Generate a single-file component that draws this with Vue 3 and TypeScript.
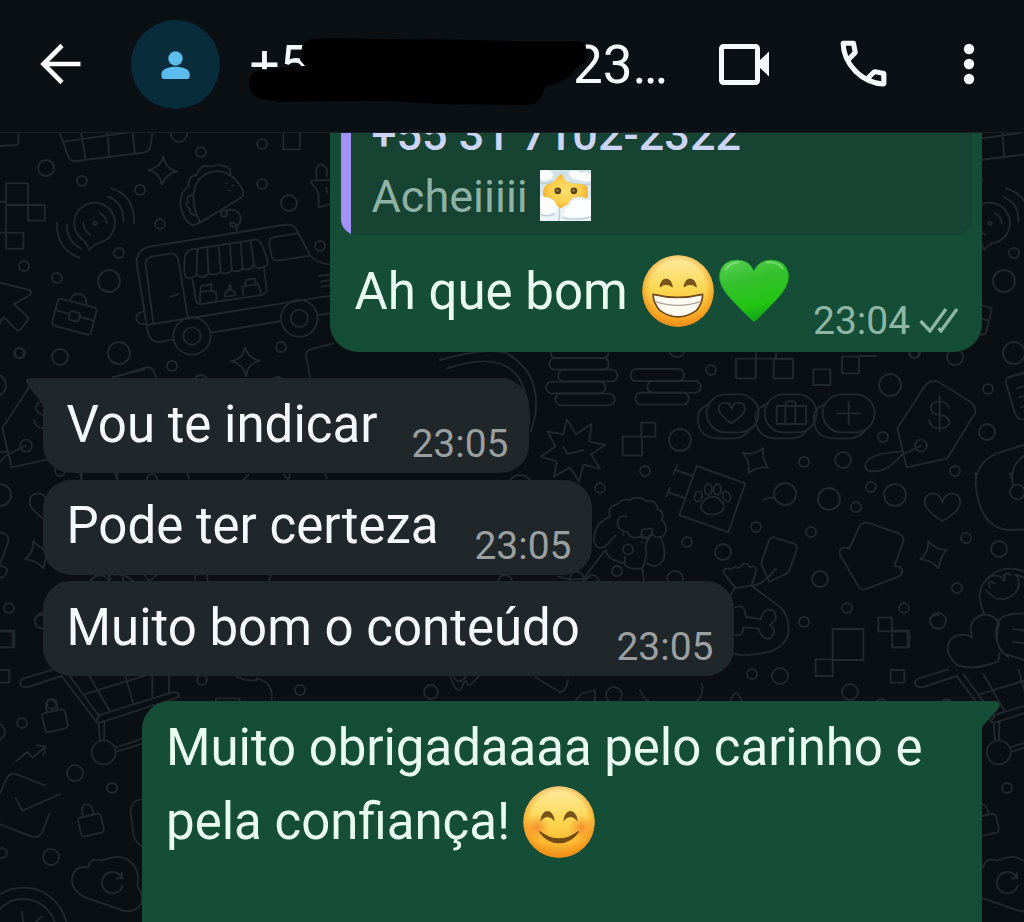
<script setup lang="ts">
interface Incoming {
  text: string
  time: string
  width: number
  tail: boolean
}

const incoming: Incoming[] = [
  { text: 'Vou te indicar', time: '23:05', width: 486, tail: true },
  { text: 'Pode ter certeza', time: '23:05', width: 549, tail: false },
  { text: 'Muito bom o conteúdo', time: '23:05', width: 691, tail: false },
]

// Wallpaper dots: x, y, radius
const dots: [number, number, number][] = [
  [46, 168, 8], [82, 181, 5], [201, 152, 5], [262, 144, 5], [140, 190, 5], [179, 134, 8],
  [262, 184, 5], [289, 203, 8], [160, 224, 5], [119, 253, 5], [24, 266, 5], [57, 278, 5],
  [109, 281, 11], [320, 246, 5], [19, 353, 5], [60, 357, 8], [119, 353, 11], [172, 366, 5],
  [281, 347, 5], [201, 382, 7], [278, 382, 5], [152, 479, 5], [9, 608, 5], [202, 680, 5],
  [300, 690, 5], [711, 370, 5], [680, 440, 11], [645, 471, 5], [600, 488, 5], [687, 542, 5],
  [723, 552, 8], [756, 527, 5], [617, 571, 5], [675, 579, 8], [520, 487, 12], [505, 582, 7],
  [592, 582, 7], [677, 349, 8], [752, 674, 5], [780, 676, 8], [890, 385, 11], [915, 353, 5],
  [988, 389, 5], [987, 432, 8], [883, 437, 5], [843, 460, 8], [804, 462, 5], [785, 494, 11],
  [829, 499, 11], [856, 507, 5], [871, 487, 5], [895, 495, 11], [955, 471, 5], [811, 532, 5],
  [820, 579, 8], [966, 538, 5], [999, 549, 8], [847, 608, 5], [957, 588, 5], [804, 622, 5],
  [938, 621, 8], [850, 692, 8], [881, 704, 5], [947, 704, 5], [22, 723, 5], [75, 773, 8],
  [112, 788, 5], [51, 857, 8], [614, 695, 8], [431, 692, 7], [897, 853, 5], [892, 732, 8],
]
</script>

<template>
  <div class="screen">
    <header class="bar">
      <svg class="back" viewBox="0 0 42 42" width="42" height="42">
        <path d="M40.500 21H3.500M22 2.500L3.500 21L22 39.500" fill="none" stroke="#fff" stroke-width="4.600" />
      </svg>
      <div class="avatar">
        <svg viewBox="0 0 30 30" width="30" height="30" fill="#5cbcec">
          <circle cx="14.500" cy="8.500" r="7.200" />
          <path d="M.5 26V24C.5 19 8 16.700 14.500 16.700S28.700 19 28.700 24V26Q28.700 29 26 29H3.200Q.5 29 .5 26Z" />
        </svg>
      </div>
      <div class="contact">
        <span class="prefix">+5</span>
        <span class="suffix">23…</span>
        <svg class="mask" viewBox="245 30 350 80" width="350" height="80">
          <path d="M310 39C340 37 380 40 430 39L515 41L578 41Q587 42 586 50Q590 57 584 64Q576 67 572 74Q565 82 545 87Q543 98 534 104Q526 106 515 105L440 104L385 101L278 102Q270 99 262 99Q249 96 249 84Q249 72 260 69Q275 70 284 67L305 66L300 60Q302 50 302 46Q305 41 310 39Z" fill="#000" />
        </svg>
      </div>
      <svg class="video" viewBox="0 0 54 44" width="54" height="44">
        <rect x="3.500" y="4.500" width="36" height="36" rx="2" fill="none" stroke="#f7fafc" stroke-width="5" />
        <path d="M41 19L51 9.500V34.500L41 25Z" fill="#f7fafc" />
      </svg>
      <svg class="call" viewBox="0 0 24 24" width="61" height="61" fill="#f7fafc">
        <path d="M19.950 21q-3.125 0-6.175-1.362T8.225 15.800 4.363 10.250 3 4.050q0-.45.3-.75t.75-.3H8.100q.35 0 .625.238t.325.562l.65 3.500q.05.4-.025.675T9.400 8.450L6.975 10.900q.5.925 1.187 1.787t1.513 1.663q.775.775 1.625 1.438T13.100 17l2.350-2.350q.225-.225.588-.338t.712-.062l3.450.7q.35.1.575.363T21 15.900v4.050q0 .45-.3.75t-.75.3M6.025 9l1.650-1.650L7.250 5H5.025q.125 1.025.35 2.025T6.025 9m8.950 8.950q.975.425 1.988.675T19 18.950v-2.200l-2.350-.475z" />
      </svg>
      <svg class="more" viewBox="0 0 12 42" width="12" height="42" fill="#f7fafc">
        <circle cx="6" cy="6" r="5.200" /><circle cx="6" cy="21" r="5.200" /><circle cx="6" cy="36" r="5.200" />
      </svg>
    </header>

    <main class="chat">
      <svg class="wallpaper" viewBox="0 133 1024 789" width="1024" height="789">
        <defs>
          <g id="doodles">
            <circle v-for="(d, i) in dots" :key="i" :cx="d[0]" :cy="d[1]" :r="d[2]" stroke-width="1.900" />
            <g transform="translate(0 130) scale(.33333)">
              <path d="M180 10L205 80Q212 96 230 93L430 68Q448 65 452 45L457 10M192 35L380 8M243 8L257 88M322 8L328 82M398 8L405 72M0 48L50 45Q56 44 55 35V8" />
              <path d="M18 160H84V225H18ZM84 225H134V272H84ZM18 308H70V356H18ZM18 225V308M0 216H18M0 308H18" />
              <path d="M250 330A61 61 0 1 1 300 338Q284 340 268 360Q264 345 250 330ZM300 250Q318 258 320 280M250 278Q250 300 270 314M325 200Q372 220 370 273M333 175Q405 195 402 280M200 283Q200 335 245 357M170 278Q172 360 238 383" />
              <circle cx="285" cy="280" r="5" />
              <path d="M490 80Q497 118 532 124Q497 130 486 164Q480 128 444 120Q482 114 490 80ZM735 652Q744 686 780 692Q744 698 738 738Q730 700 692 694Q730 688 735 652Z" />
              <path d="M600 278L720 205Q735 195 728 180Q700 125 650 123Q585 130 580 200Q580 240 597 268Q602 285 575 285Q550 270 541 225Q540 185 565 170Q565 135 590 135Q600 100 635 110Q665 98 690 118L692 132M575 195q-20 5-10 20q-15 10 5 22q-5 15 18 20M678 160h4M697 166h4M686 181h4" />
              <path d="M680 240Q722 235 722 268Q718 295 692 288Q685 278 702 278Q712 285 710 302" /><circle cx="672" cy="251" r="9" />
              <path d="M440 585L410 400Q408 360 450 350L850 285Q880 280 890 300L930 375Q950 400 990 403M440 585L1010 494M440 585Q445 640 480 636L520 628M633 608L845 573M955 555L1000 549M460 580L437 405Q435 385 455 380L510 371Q530 370 535 390L563 560M510 500q20-2 25-10M430 545Q405 550 410 570Q415 585 438 582" />
              <circle cx="576" cy="618" r="56" /><circle cx="576" cy="618" r="26" /><circle cx="898" cy="565" r="55" /><circle cx="898" cy="565" r="26" />
              <path d="M555 380Q558 362 575 358L770 328Q785 330 803 395Q804 412 785 412Q772 420 760 405Q750 425 728 416Q715 430 695 420Q680 438 662 425Q645 440 625 430Q610 450 590 435Q572 452 556 440Q550 415 555 380M592 357L590 435M622 352L625 430M656 347L662 425M690 342L695 420M722 336L728 414M752 332L762 405M578 450L588 510Q590 524 605 522L785 495Q800 490 800 478L792 415M600 515V488Q620 478 648 486L650 512M602 482Q598 462 618 466L635 462V482M676 500Q672 485 687 480V466H692V480Q710 488 706 496ZM730 495L727 470L775 462L782 488M735 465L738 450L765 446L768 460" />
              <path d="M808 340Q806 325 820 322L890 310M808 340L815 380Q820 393 832 392L930 377M958 438L1000 432M962 455L1000 449M965 470L1000 465" />
              <g transform="rotate(15 223 560)"><rect x="163" y="518" width="120" height="84" rx="10" /><path d="M163 556H207M239 556H283M198 518Q200 490 223 490T248 518" /><rect x="208" y="546" width="30" height="26" rx="4" /></g>
              <path d="M0 458L88 480Q98 485 90 495L42 522L82 560Q88 568 80 575L62 598Q55 605 48 598L15 565Q5 560 0 580" />
              <path d="M1000 150L935 152Q930 158 945 172Q960 185 955 232L1000 220M950 150Q942 105 965 103Q985 110 980 140M978 172l4 16M850 8V58H900V8M340 742L440 712Q460 708 468 742M930 742L918 680Q915 665 930 658L1000 640" />
            </g>
            <g transform="translate(0 360) scale(.33333)">
              <path d="M240 340l5 15M345 340l6 17M562 340l5 15M745 345l-15 15M850 340l15 20l5-20M975 340l5 15M270 665l15-15q30-10 40 12M325 645l5 15M360 645q20 0 38 18M435 645q10 30 35 0M585 645v18M622 645v18M812 645l-5 18M105 780Q105 765 130 765M105 780Q105 805 130 805" />
              <path d="M-5 815H38V862H-5" />
            </g>
            <g transform="translate(480 340) scale(.33333)">
              <path d="M-120 60Q20 20 80 40Q185 100 165 230L152 275M-100 85Q70 30 120 120Q148 170 148 250" />
              <rect x="208" y="54" width="178" height="35" rx="17" /><rect x="234" y="89" width="178" height="35" rx="17" /><rect x="198" y="125" width="178" height="35" rx="17" /><rect x="226" y="161" width="178" height="35" rx="17" /><path d="M212 38Q212 54 230 54H370Q386 54 385 38" />
              <rect x="452" y="87" width="160" height="36" rx="17" /><rect x="502" y="123" width="160" height="35" rx="17" /><rect x="466" y="158" width="160" height="36" rx="17" />
              <path d="M260 238L288 283L335 252L328 305L376 315L333 343L360 386L310 374L297 425L270 382L222 410L230 364L182 350L226 320L203 274L250 283ZM250 320L262 342L310 330" />
              <path d="M428 290H486V347H428ZM484 248H526V290H484ZM768 56H827V115H768ZM768 56H940M828 38V56M888 38V56" />
              <g id="pill"><rect x="680" y="163" width="156" height="114" rx="57" /><path d="M690 190Q652 205 653 235Q655 295 715 295H765Q790 292 805 275" /></g>
              <use href="#pill" x="174" /><use href="#pill" x="348" />
              <path d="M755 250Q715 222 716 205Q717 188 735 188Q752 188 755 208Q758 188 775 188Q795 190 795 208Q794 222 755 250Z" />
              <path d="M650 378L796 430L745 577L598 525ZM638 408L585 390M592 375L580 403M614 474L563 456M570 443L558 470" />
              <path d="M697 470C720 470 738 495 728 512C715 525 685 530 667 512C655 495 675 470 697 470Z" /><ellipse cx="655" cy="469" rx="11" ry="16" transform="rotate(15 655 469)" /><ellipse cx="685" cy="448" rx="11" ry="16" /><ellipse cx="712" cy="448" rx="11" ry="16" /><ellipse cx="740" cy="470" rx="11" ry="16" transform="rotate(-20 740 470)" />
              <path d="M787 337Q820 350 850 323Q845 355 864 383Q830 378 806 400Q810 360 787 337ZM850 480Q865 470 885 474" />
              <path d="M390 530Q380 500 412 493Q425 475 450 480Q475 465 500 483Q530 480 533 507Q555 515 545 540Q570 560 550 588Q520 600 515 575Q525 560 500 568Q480 565 485 585Q500 600 515 585Q505 600 480 590Q450 600 442 575Q415 575 412 548Q415 525 440 530M390 530Q340 550 342 605Q355 640 385 610L407 585M378 630Q380 660 435 670Q435 690 485 685Q505 650 497 620Q500 600 515 580M540 590Q560 630 550 660Q530 690 500 670M435 672V650M375 632L315 710M487 685L492 722M430 580v5M485 605v3M235 710Q280 725 330 712" /><circle cx="444" cy="628" r="15" /><circle cx="411" cy="693" r="15" /><circle cx="290" cy="715" r="20" />
              <path d="M765 742L732 700Q725 685 745 685Q755 690 765 680Q780 690 790 670Q805 670 808 682Q825 675 830 690L815 735Q790 745 765 742ZM815 738L900 800Q930 830 925 880Q915 920 870 935Q800 950 762 942M765 742L750 770M765 802Q795 790 797 830L843 838Q850 800 880 812Q900 835 870 855Q895 870 870 895Q845 900 835 865L790 862Q790 890 765 885" />
              <path d="M818 738Q860 725 885 688M885 688L890 688M880 592L945 612Q955 620 950 630L930 685Q925 700 910 705L868 725L845 675Q843 665 850 650L868 600Q872 592 880 592Z" />
            </g>
            <g transform="translate(740 340) scale(.33333)">
              <path d="M101 58H159V115H101ZM220 88H271V135H220ZM306 50H357V100H306ZM357 48H407" />
              <path d="M110 198H198V252H110ZM136 198V252M166 198V252M136 198Q135 183 152 183Q168 183 168 198M326 186V254M292 220H360" />
              <path d="M472 265L555 137Q570 118 595 125L690 185Q710 200 705 220L622 355L500 382ZM485 335Q375 340 375 380Q378 400 420 392Q450 385 485 345L543 317" /><circle cx="543" cy="317" r="18" />
              <path d="M627 205Q625 185 598 184Q572 186 572 205Q575 222 598 225Q628 228 628 248Q625 265 598 265Q570 265 568 240M599 168V273" />
              <path d="M607 543Q553 510 554 485Q556 460 580 460Q602 462 607 488Q612 462 636 460Q660 462 661 485Q660 515 607 543Z" />
              <path d="M850 315L770 340Q705 370 707 435Q720 570 815 570L852 568M852 347Q805 380 820 440" /><circle cx="832" cy="456" r="22" />
              <path d="M900 88L810 110Q795 115 798 130L825 220Q832 240 850 238M830 145l30-8M838 172l25-6M842 202l20-5" />
              <path d="M358 560Q368 542 390 550L480 582Q492 590 490 605L463 678Q490 680 486 695Q485 705 475 710L375 748Q360 750 355 738L300 645Q295 625 312 622L328 626ZM565 603Q585 630 620 630Q600 650 596 685Q575 660 541 658Q565 640 565 603Z" />
              <path d="M278 867H370V960H278ZM227 958H278V1008H227ZM415 833H456V874H415ZM456 872H508V922H456ZM452 990H493V1028H452Z" />
              <path d="M733 822Q690 730 780 690Q820 680 855 695M738 750Q780 800 825 760Q845 735 830 705M750 742Q740 715 765 730M795 718Q790 690 812 705" />
              <path d="M650 975Q605 930 635 895Q665 875 697 892Q680 840 725 825Q760 820 778 850Q760 910 790 940L852 960M852 820Q780 820 772 850Q755 915 805 952M820 867l35 5M820 905l35 5M650 975Q690 990 740 975L775 965L778 940" />
            </g>
            <g transform="translate(0 660) scale(.33333)">
              <path d="M160 28L72 55Q55 62 62 75Q70 85 88 80L185 48L285 180Q290 190 300 188L525 115Q540 110 537 103Q530 95 515 98L295 166L205 42M250 104L490 30M300 165L290 180M265 42L327 150M370 28L400 132M457 30V115M507 30V100M296 190L300 240M313 186L312 238M348 262L430 235M352 274L430 250" />
              <circle cx="311" cy="277" r="36" />
              <g id="lock" transform="rotate(-13 166 182)"><rect x="130" y="153" width="70" height="58" rx="10" /><path d="M148 153V140Q148 118 164 118Q180 120 180 140V153" /></g>
              <use href="#lock" x="108" y="313" />
              <path d="M48 304L82 275L97 293L136 260M110 256L137 260L130 286M0 400L20 355Q30 337 50 343L135 376M48 415L67 452L181 402M148 462L125 520Q115 535 95 530L0 493M430 418Q390 420 392 460L400 520Q405 550 430 562" />
              <path d="M265 622Q270 590 305 602Q330 592 355 590Q412 600 415 660L412 680Q430 700 425 730Q405 760 370 752L255 712Q210 690 217 650Q225 615 265 622ZM368 678A32 32 0 1 1 364 650M350 655L367 654L365 638" />
              <circle cx="70" cy="815" r="132" /><circle cx="70" cy="815" r="98" /><path d="M65 755L72 800M125 770L90 800" />
              <path d="M648 125V115H718V125M708 48Q735 65 770 60M770 55Q820 65 815 120M1270 30Q1300 60 1330 30M1360 50q20 30 40-5" />
            </g>
            <path d="M450 677q8 20 12 10t5-4t12-7M535 677l25 15q6 0 8-12M640 690Q650 714 690 706Q705 698 702 684M575 702l6-8l14-4v12M730 701q6-15 12 0" stroke-width="1.800" />
          </g>
        </defs>
        <g class="ink">
          <use href="#doodles" x="-895" />
          <use href="#doodles" />
          <use href="#doodles" x="895" />
        </g>
      </svg>

      <section class="bubble out first">
        <div class="quote">
          <div class="quote-name">+55 31 7102-2322</div>
          <div class="quote-line">
            <span class="quote-text">Acheiiiii</span>
            <svg class="cloudface" viewBox="0 0 152 152" width="51" height="51">
              <defs>
                <radialGradient id="sun" cx=".5" cy=".5" r=".55"><stop offset="0" stop-color="#fde070" /><stop offset=".6" stop-color="#fbd04d" /><stop offset="1" stop-color="#f0a82a" /></radialGradient>
                <linearGradient id="sky" x2="0" y2="1"><stop offset="0" stop-color="#cfdfe6" /><stop offset="1" stop-color="#eef5fa" /></linearGradient>
              </defs>
              <rect width="152" height="152" fill="url(#sky)" />
              <path d="M0 4Q22-6 34 6Q44 12 38 22Q24 34 0 30ZM84 6Q104-4 122 8Q140 2 152 12V32Q130 38 112 28Q92 28 84 6ZM0 80Q20 74 34 88Q50 92 52 108Q56 122 40 128Q20 138 0 130ZM74 118Q80 108 90 104Q94 84 110 86Q128 82 134 92L152 86V142Q110 150 82 140Q66 134 74 118Z" fill="#fbfdff" />
              <path d="M0 132Q24 142 44 130M66 142Q100 152 152 140M57 114Q60 130 56 152M0 38Q20 44 38 34M86 36Q110 46 152 42" fill="none" stroke="#bccdd8" stroke-width="4" />
              <path d="M9 64Q12 48 24 42Q38 40 46 30Q54 16 64 12Q70 18 74 30Q88 42 106 40Q126 42 138 46Q146 62 141 84Q122 76 102 82Q88 88 84 102Q72 106 62 114Q50 110 46 96Q36 82 12 80Q7 74 9 64Z" fill="url(#sun)" />
              <circle cx="53" cy="62" r="10" fill="#5a4317" /><circle cx="101" cy="62" r="10" fill="#5a4317" /><circle cx="52" cy="61" r="4" fill="#9a7f45" /><circle cx="100" cy="61" r="4" fill="#9a7f45" />
            </svg>
          </div>
        </div>
        <div class="reply">
          <span class="text reply-text">Ah que bom</span>
          <svg class="emoji grin" viewBox="0 0 216 216" width="72" height="72">
            <defs>
              <linearGradient id="face" x1="0" y1="0" x2="0" y2="1"><stop offset="0" stop-color="#fdeaa4" /><stop offset=".45" stop-color="#fdda55" /><stop offset=".8" stop-color="#fcb831" /><stop offset="1" stop-color="#f2981f" /></linearGradient>
              <radialGradient id="rim" cx=".5" cy=".46" r=".54"><stop offset=".7" stop-color="#f79a1c" stop-opacity="0" /><stop offset="1" stop-color="#ee8c14" stop-opacity=".85" /></radialGradient>
            </defs>
            <circle cx="108" cy="108" r="107" fill="url(#face)" /><circle cx="108" cy="108" r="107" fill="url(#rim)" />
            <path d="M54 96Q57 73 72 72Q88 73 91 96Q82 88 72 88Q63 88 54 96ZM126 96Q129 73 144 72Q160 73 163 96Q154 88 144 88Q135 88 126 96Z" fill="#79521a" stroke="#79521a" stroke-width="3" stroke-linejoin="round" />
            <path d="M33 118Q108 136 182 118Q182 145 164 166Q108 205 53 166Q34 145 33 118Z" fill="#fffaf2" stroke="#6c491c" stroke-width="5" stroke-linejoin="round" />
            <path d="M38 139Q108 163 178 139" fill="none" stroke="#aaa198" stroke-width="4" />
          </svg>
          <svg class="emoji heart" viewBox="0 0 216 196" width="72" height="66">
            <defs><linearGradient id="green" x1=".2" y1="0" x2=".5" y2="1"><stop offset="0" stop-color="#55ce52" /><stop offset=".35" stop-color="#34c02d" /><stop offset=".75" stop-color="#24c414" /><stop offset="1" stop-color="#12a414" /></linearGradient></defs>
            <path d="M108 190Q92 178 42 125Q-2 80 5 46Q12 6 58 5Q94 6 108 38Q122 6 158 5Q204 6 211 46Q218 80 174 125Q124 178 108 190Z" fill="url(#green)" stroke="#20a12b" stroke-width="2" />
            <path d="M24 34Q34 14 62 12M146 12Q176 8 194 30" fill="none" stroke="#a0eb92" stroke-width="6" stroke-linecap="round" opacity=".55" />
          </svg>
          <span class="time out-time">23:04</span>
          <svg class="ticks" viewBox="0 0 40 26" width="40" height="26">
            <path d="M1.500 14L11 24L27 2M19.500 21L22 24L38 2" fill="none" stroke="#8fb6a4" stroke-width="3.300" />
          </svg>
        </div>
      </section>

      <section
        v-for="m in incoming"
        :key="m.text"
        class="bubble in"
        :class="{ tailed: m.tail }"
        :style="{ width: m.width + 'px' }"
      >
        <span class="text">{{ m.text }}</span>
        <span class="time">{{ m.time }}</span>
        <svg v-if="m.tail" class="tail left" viewBox="0 0 40 30" width="40" height="30">
          <path d="M40 0H3Q-2 1 1 6L17 27V30H40Z" fill="#20272a" />
        </svg>
      </section>

      <section class="bubble out last">
        <div class="text line-a">Muito obrigadaaaa pelo carinho e</div>
        <div class="second">
          <span class="text line-b">pela confiança!</span>
          <svg class="emoji blush" viewBox="0 0 216 216" width="72" height="72">
            <defs><radialGradient id="cheek"><stop offset="0" stop-color="#f4661c" stop-opacity=".6" /><stop offset="1" stop-color="#f4771c" stop-opacity="0" /></radialGradient></defs>
            <circle cx="108" cy="108" r="107" fill="url(#face)" /><circle cx="108" cy="108" r="107" fill="url(#rim)" />
            <circle cx="40" cy="124" r="40" fill="url(#cheek)" /><circle cx="176" cy="124" r="40" fill="url(#cheek)" />
            <path d="M53 104Q57 77 73 76Q90 77 94 104Q84 92 73 92Q63 92 53 104ZM122 104Q126 77 142 76Q159 77 163 104Q153 92 142 92Q132 92 122 104Z" fill="#79521a" stroke="#79521a" stroke-width="2" stroke-linejoin="round" />
            <path d="M50 137Q108 181 166 137Q144 170 108 170T50 137Z" fill="#704b13" stroke="#704b13" stroke-width="4" stroke-linejoin="round" />
          </svg>
        </div>
        <svg class="tail right" viewBox="0 0 40 30" width="40" height="30">
          <path d="M0 0H36Q42 2 38 8L22 26V30H0Z" fill="#154d37" />
        </svg>
      </section>
    </main>
  </div>
</template>

<style>
body {
  margin: 0;
  background: #0a0f13;
}
</style>

<style scoped>
.screen {
  width: 1024px;
  height: 922px;
  overflow: hidden;
  background: #0a0f13;
  font-family: Roboto, "Liberation Sans", sans-serif;
  display: flex;
  flex-direction: column;
}
svg {
  display: block;
  flex: none;
}
.bar {
  height: 132px;
  flex: none;
  background: #0b1014;
  border-bottom: 1px solid #1c2226;
  display: flex;
  align-items: flex-start;
}
.back {
  margin: 43px 0 0 40px;
}
.avatar {
  width: 89px;
  height: 89px;
  margin: 20px 0 0 49px;
  border-radius: 50%;
  background: #082c3c;
  display: flex;
  align-items: center;
  justify-content: center;
}
.contact {
  position: relative;
  width: 450px;
  height: 80px;
  margin: 30px 0 0 25px;
  display: flex;
  color: #f7fafc;
  font-size: 53px;
  line-height: 70px;
  white-space: pre;
}
.prefix {
  width: 323.5px;
  padding-left: 4.5px;
}
.mask {
  position: absolute;
  left: 0;
  top: 0;
}
.video {
  margin: 42px 0 0 23px;
}
.call {
  margin: 33px 0 0 61px;
}
.more {
  margin: 43px 0 0 69px;
}
.chat {
  position: relative;
  flex: 1;
  overflow: hidden;
}
.wallpaper {
  position: absolute;
  left: 0;
  top: 0;
}
.ink {
  fill: none;
  stroke: #22292d;
  stroke-width: 5.6;
  stroke-linecap: round;
  stroke-linejoin: round;
}
.bubble {
  position: relative;
  box-sizing: border-box;
}
.text {
  font-size: 51px;
  line-height: 60px;
  white-space: nowrap;
}
.out {
  background: #154d37;
  color: #e8fdf0;
}
.first {
  width: 652px;
  height: 219px;
  margin-left: 330px;
  padding: 0 10px 0 11px;
  border-radius: 0 0 28px 28px;
}
.quote {
  box-sizing: border-box;
  height: 102px;
  overflow: hidden;
  border-radius: 0 0 16px 16px;
  background: linear-gradient(to right, #a491f8 10px, #174333 10px);
  padding-left: 30.5px;
}
.quote-name {
  margin-top: -25px;
  font-size: 45px;
  line-height: 54px;
  font-weight: 500;
  color: #ccd5f8;
  white-space: nowrap;
}
.quote-line {
  display: flex;
  margin-top: 8px;
}
.quote-text {
  width: 168.5px;
  font-size: 45px;
  line-height: 53px;
  color: #8eb2a3;
  white-space: nowrap;
}
.cloudface {
  margin-top: 0;
}
.reply {
  display: flex;
  padding: 18px 0 0 13.5px;
}
.reply-text {
  width: 287.5px;
  margin-top: 9px;
}
.emoji.heart {
  margin: 5px 0 0 4px;
}
.grin {
  margin-top: 2px;
}
.time {
  font-size: 39px;
  line-height: 46px;
  color: #9a9fa2;
  white-space: nowrap;
}
.out-time {
  margin: 44.5px 0 0 23px;
  width: 106px;
  color: #8fb6a4;
}
.ticks {
  margin-top: 54px;
}
.in {
  display: flex;
  justify-content: space-between;
  height: 95px;
  margin: 6.5px 0 0 42.5px;
  padding: 16.5px 20px 0 24px;
  border-radius: 28px;
  background: #20272a;
  color: #f6f9fb;
}
.in .time {
  margin-top: 26.5px;
}
.tailed {
  margin-top: 26px;
  border-top-left-radius: 0;
}
.tail {
  position: absolute;
  top: 0;
}
.left {
  left: -17px;
}
.last {
  width: 840px;
  height: 240px;
  margin: 25px 0 0 142px;
  padding: 17px 0 0 24px;
  border-radius: 28px 0 0 0;
}
.line-a {
  letter-spacing: -0.05px;
}
.second {
  display: flex;
  margin-top: 7px;
}
.line-b {
  width: 357px;
  margin-top: 7px;
}
.blush {
  margin-top: 1px;
}
.right {
  right: -18px;
}
</style>
